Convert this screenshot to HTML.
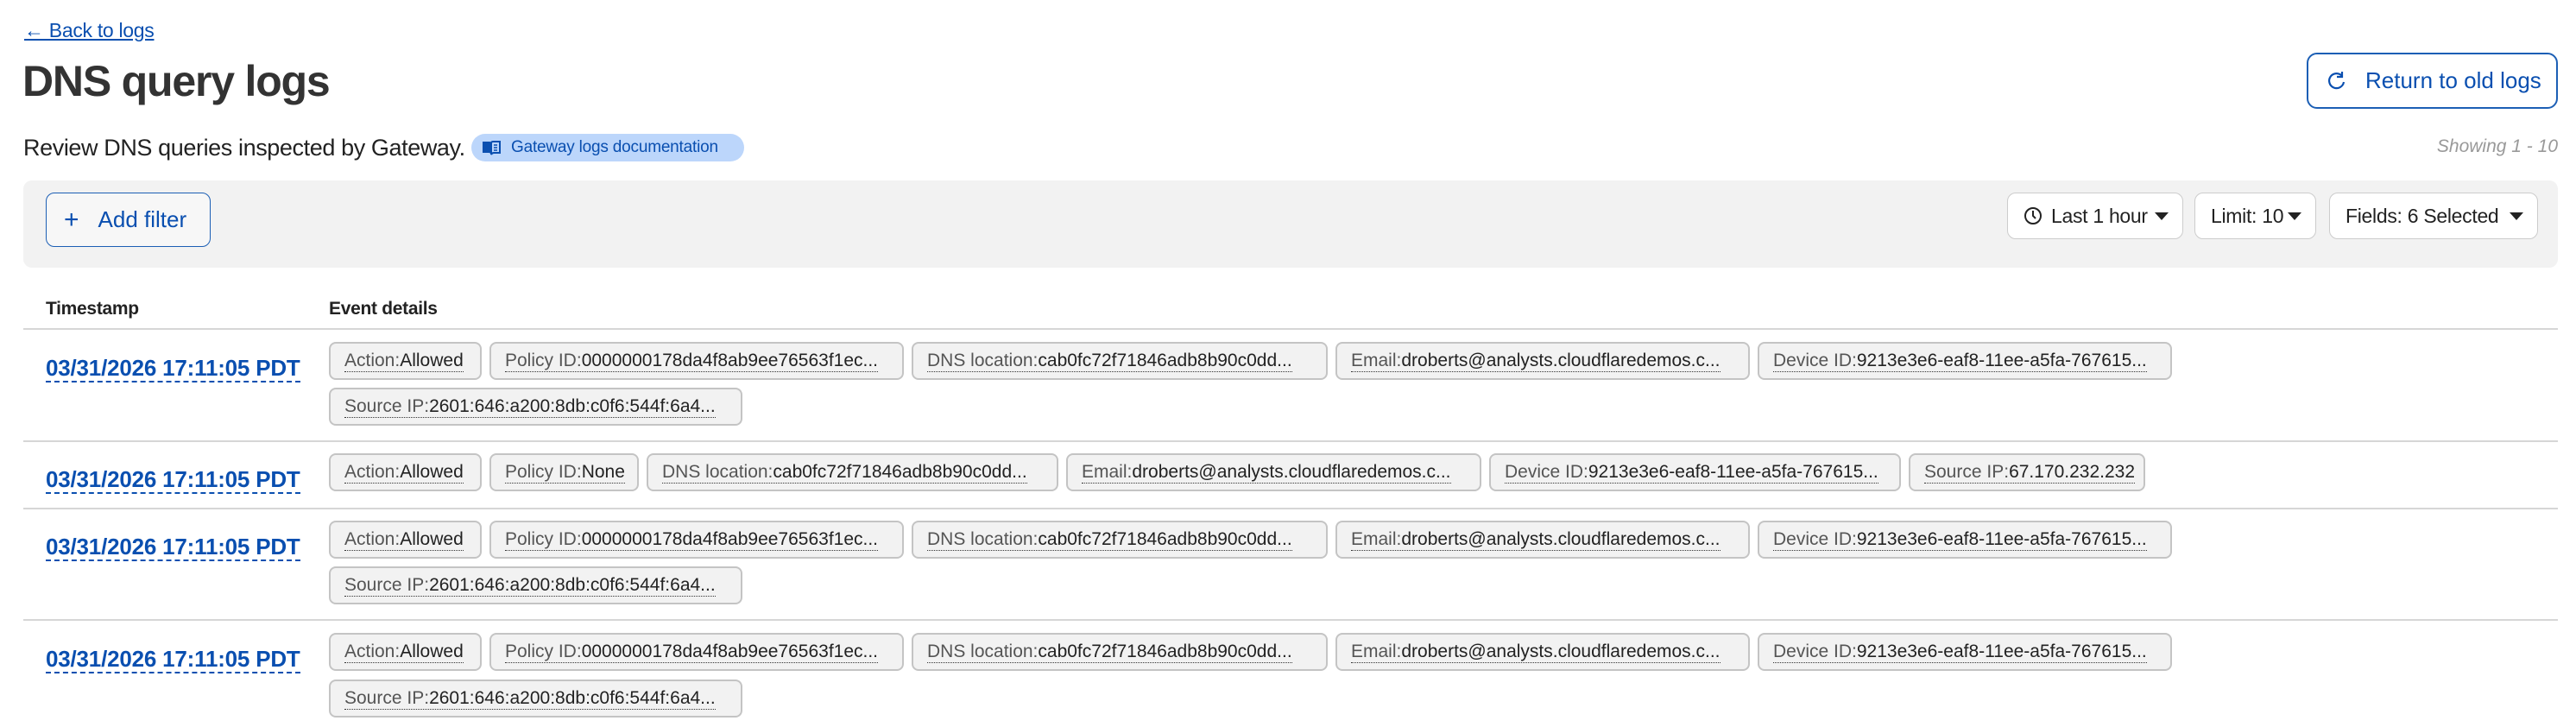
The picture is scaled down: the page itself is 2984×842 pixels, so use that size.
<!DOCTYPE html>
<html><head><meta charset="utf-8"><style>
*{box-sizing:border-box;margin:0;padding:0}
body{width:2984px;height:842px;background:#fff;font-family:"Liberation Sans",sans-serif;color:#222;position:relative;overflow:hidden}
.a{position:absolute}
.back{left:28px;top:22px;font-size:23px;color:#0a4fb0;text-decoration:underline;letter-spacing:-0.3px}
h1{position:absolute;left:26px;top:65px;font-size:50px;font-weight:bold;color:#333;letter-spacing:-1.2px}
.ret{left:2672px;top:61px;width:291px;height:65px;border:2px solid #1c5fb5;border-radius:12px;color:#0a4fb0;font-size:26px;display:flex;align-items:center;padding-left:22px;gap:22px}
.sub{left:27px;top:156px;font-size:27px;color:#222;letter-spacing:-0.4px}
.pill{left:546px;top:155px;width:316px;height:32px;background:#bcd6fb;border-radius:16px;color:#0a4fb0;font-size:19px;display:flex;align-items:center;padding-left:12px;gap:12px;letter-spacing:-0.2px}
.show{right:21px;top:158px;font-size:21px;color:#999;font-style:italic}
.bar{left:27px;top:209px;width:2936px;height:101px;background:#f2f2f2;border-radius:10px}
.add{left:53px;top:223px;width:191px;height:63px;border:1.5px solid #1c5fb5;border-radius:10px;color:#0a4fb0;font-size:26px;display:flex;align-items:center;padding-left:20px;gap:22px;background:#f7f7f7}
.dd{top:223px;height:54px;background:#fff;border:1.5px solid #ccc;border-radius:10px;font-size:23px;display:flex;align-items:center;padding-left:18px;gap:10px;color:#222;letter-spacing:-0.3px}
.caret{position:absolute;right:16px;top:22px;width:0;height:0;border-left:8px solid transparent;border-right:8px solid transparent;border-top:9px solid #222}
.th{top:346px;font-size:21px;font-weight:bold;color:#222;letter-spacing:-0.3px}
.line{left:27px;width:2936px;height:2px;background:#d6d6d6}
.ts{left:53px;font-size:26px;font-weight:bold;color:#0a4fb0;border-bottom:2.5px dashed #0a4fb0;letter-spacing:-0.2px;line-height:30px}
.chips{left:381px;display:flex;gap:9px}
.c{height:44px;background:#f2f2f2;border:2px solid #c4c4c4;border-radius:8px;font-size:21px;padding:0 16px;display:flex;align-items:center;white-space:nowrap;overflow:hidden;letter-spacing:0}
.c span{border-bottom:1.5px dotted #333;line-height:24px}
.c i{font-style:normal;color:#555}
</style></head><body>
<div class="a back">← Back to logs</div>
<h1>DNS query logs</h1>
<div class="a ret"><svg width="22" height="24" viewBox="0 0 22 24"><path d="M17 6 A8.5 8.5 0 1 0 19 13" fill="none" stroke="#0a4fb0" stroke-width="2.2"/><path d="M17 1 V7 H11" fill="none" stroke="#0a4fb0" stroke-width="2.2"/></svg>Return to old logs</div>
<div class="a sub">Review DNS queries inspected by Gateway.</div>
<div class="a pill"><svg width="22" height="18" viewBox="0 0 22 18"><path d="M1 2 H9 Q11 2 11 4 V17 Q10 15 8 15 H1Z" fill="#0a4fb0"/><path d="M21 2 H13 Q11 2 11 4 V17 Q12 15 14 15 H21Z" fill="none" stroke="#0a4fb0" stroke-width="2"/><path d="M14 6H18M14 9H18M14 12H18" stroke="#0a4fb0" stroke-width="1.5"/></svg>Gateway logs documentation</div>
<div class="a show">Showing 1 - 10</div>
<div class="a bar"></div>
<div class="a add"><span style="font-size:30px;font-weight:300">+</span>Add filter</div>
<div class="a dd" style="left:2325px;width:204px"><svg width="22" height="22" viewBox="0 0 22 22"><circle cx="11" cy="11" r="9" fill="none" stroke="#222" stroke-width="2"/><path d="M11 5V11L14 14" fill="none" stroke="#222" stroke-width="2"/></svg>Last 1 hour<div class="caret"></div></div>
<div class="a dd" style="left:2542px;width:141px">Limit: 10<div class="caret"></div></div>
<div class="a dd" style="left:2698px;width:242px">Fields: 6 Selected<div class="caret"></div></div>
<div class="a th" style="left:53px">Timestamp</div>
<div class="a th" style="left:381px">Event details</div>
<div class="a line" style="top:380px"></div>

<div class="a ts" style="top:411px">03/31/2026 17:11:05 PDT</div>
<div class="a chips" style="top:396px">
<div class="c" style="width:177px"><span><i>Action:</i>Allowed</span></div>
<div class="c" style="width:480px"><span><i>Policy ID:</i>0000000178da4f8ab9ee76563f1ec...</span></div>
<div class="c" style="width:482px"><span><i>DNS location:</i>cab0fc72f71846adb8b90c0dd...</span></div>
<div class="c" style="width:480px"><span><i>Email:</i>droberts@analysts.cloudflaredemos.c...</span></div>
<div class="c" style="width:480px"><span><i>Device ID:</i>9213e3e6-eaf8-11ee-a5fa-767615...</span></div>
</div>
<div class="a chips" style="top:449px">
<div class="c" style="width:479px"><span><i>Source IP:</i>2601:646:a200:8db:c0f6:544f:6a4...</span></div>
</div>
<div class="a line" style="top:510px"></div>

<div class="a ts" style="top:540px">03/31/2026 17:11:05 PDT</div>
<div class="a chips" style="top:525px">
<div class="c" style="width:177px"><span><i>Action:</i>Allowed</span></div>
<div class="c" style="width:173px"><span><i>Policy ID:</i>None</span></div>
<div class="c" style="width:477px"><span><i>DNS location:</i>cab0fc72f71846adb8b90c0dd...</span></div>
<div class="c" style="width:481px"><span><i>Email:</i>droberts@analysts.cloudflaredemos.c...</span></div>
<div class="c" style="width:477px"><span><i>Device ID:</i>9213e3e6-eaf8-11ee-a5fa-767615...</span></div>
<div class="c" style="width:274px"><span><i>Source IP:</i>67.170.232.232</span></div>
</div>
<div class="a line" style="top:588px"></div>

<div class="a ts" style="top:618px">03/31/2026 17:11:05 PDT</div>
<div class="a chips" style="top:603px">
<div class="c" style="width:177px"><span><i>Action:</i>Allowed</span></div>
<div class="c" style="width:480px"><span><i>Policy ID:</i>0000000178da4f8ab9ee76563f1ec...</span></div>
<div class="c" style="width:482px"><span><i>DNS location:</i>cab0fc72f71846adb8b90c0dd...</span></div>
<div class="c" style="width:480px"><span><i>Email:</i>droberts@analysts.cloudflaredemos.c...</span></div>
<div class="c" style="width:480px"><span><i>Device ID:</i>9213e3e6-eaf8-11ee-a5fa-767615...</span></div>
</div>
<div class="a chips" style="top:656px">
<div class="c" style="width:479px"><span><i>Source IP:</i>2601:646:a200:8db:c0f6:544f:6a4...</span></div>
</div>
<div class="a line" style="top:717px"></div>

<div class="a ts" style="top:748px">03/31/2026 17:11:05 PDT</div>
<div class="a chips" style="top:733px">
<div class="c" style="width:177px"><span><i>Action:</i>Allowed</span></div>
<div class="c" style="width:480px"><span><i>Policy ID:</i>0000000178da4f8ab9ee76563f1ec...</span></div>
<div class="c" style="width:482px"><span><i>DNS location:</i>cab0fc72f71846adb8b90c0dd...</span></div>
<div class="c" style="width:480px"><span><i>Email:</i>droberts@analysts.cloudflaredemos.c...</span></div>
<div class="c" style="width:480px"><span><i>Device ID:</i>9213e3e6-eaf8-11ee-a5fa-767615...</span></div>
</div>
<div class="a chips" style="top:787px">
<div class="c" style="width:479px"><span><i>Source IP:</i>2601:646:a200:8db:c0f6:544f:6a4...</span></div>
</div>
</body></html>
